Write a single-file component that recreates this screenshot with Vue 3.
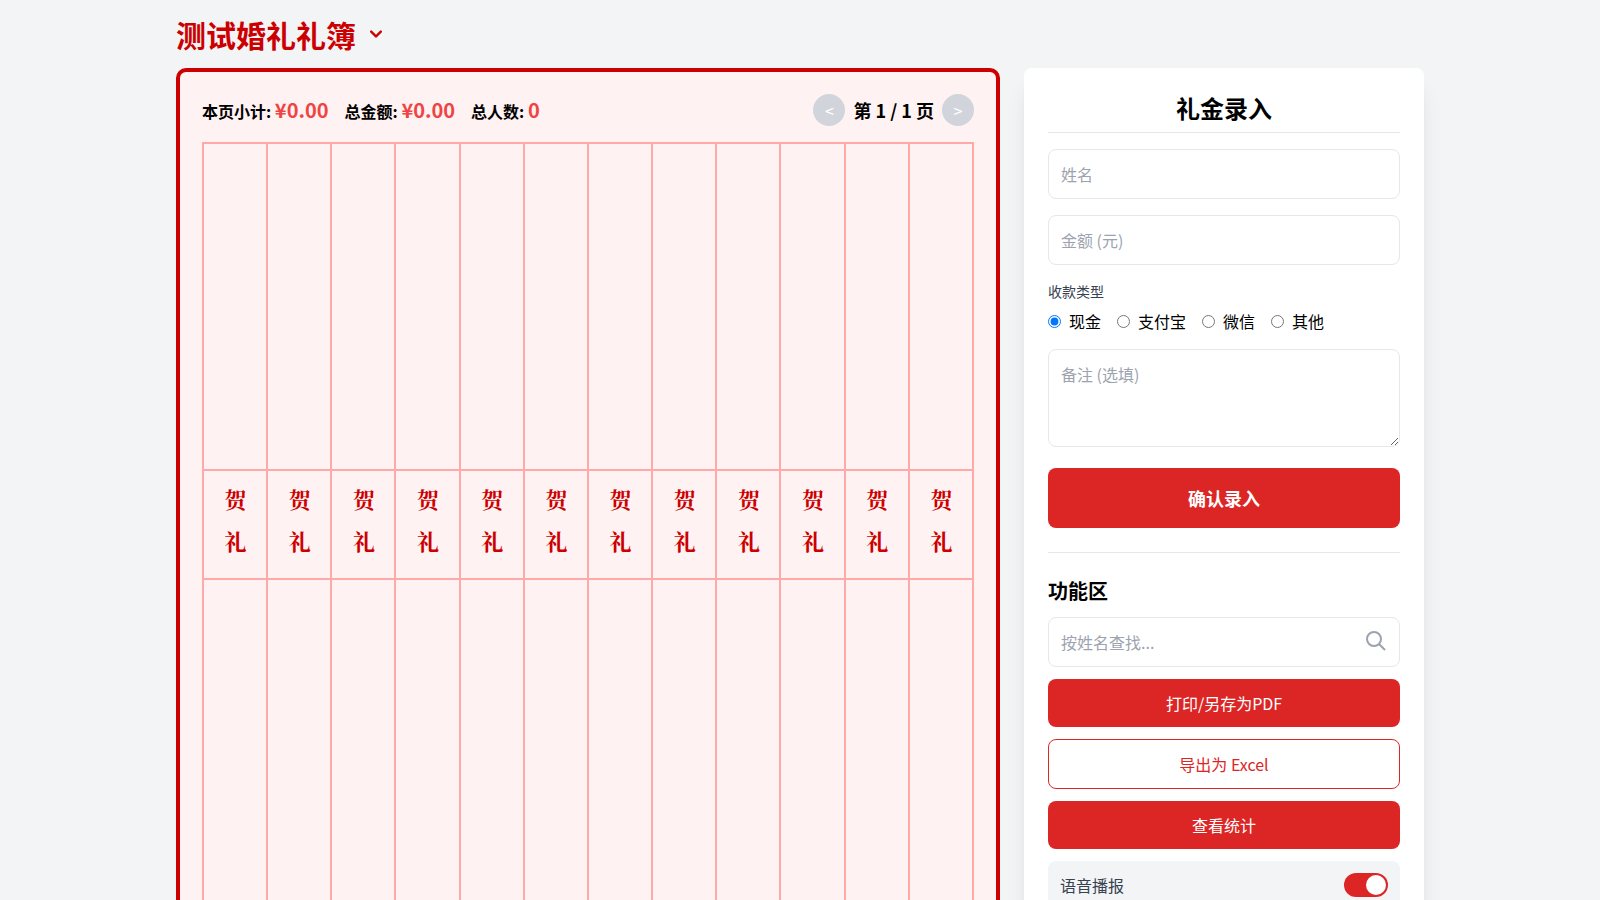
<script setup>
import { ref, computed } from 'vue'

const columns = 12
const paymentTypes = ['现金', '支付宝', '微信', '其他']

const name = ref('')
const amount = ref('')
const payment = ref('现金')
const note = ref('')
const keyword = ref('')
const voice = ref(true)
const page = ref(1)
const records = ref([])

const total = computed(() => records.value.reduce((sum, r) => sum + r.amount, 0))
const stats = computed(() => [
  { label: '本页小计:', value: '¥' + total.value.toFixed(2) },
  { label: '总金额:', value: '¥' + total.value.toFixed(2) },
  { label: '总人数:', value: String(records.value.length) },
])
</script>

<template>
  <div class="page">
    <header class="top">
      <h1>测试婚礼礼簿</h1>
      <button class="menu-toggle" type="button" aria-label="切换">
        <svg viewBox="0 0 20 20" width="24" height="24" fill="currentColor">
          <path fill-rule="evenodd" clip-rule="evenodd" d="M5.293 7.293a1 1 0 011.414 0L10 10.586l3.293-3.293a1 1 0 111.414 1.414l-4 4a1 1 0 01-1.414 0l-4-4a1 1 0 010-1.414z" />
        </svg>
      </button>
    </header>

    <main class="layout">
      <section class="book">
        <div class="book-head">
          <div class="stats">
            <div v-for="s in stats" :key="s.label">{{ s.label }} <span class="value">{{ s.value }}</span></div>
          </div>
          <nav class="pager">
            <button type="button" disabled aria-label="上一页">&lt;</button>
            <span>第 {{ page }} / 1 页</span>
            <button type="button" disabled aria-label="下一页">&gt;</button>
          </nav>
        </div>
        <div class="ledger">
          <div v-for="c in columns" :key="c" class="entry">
            <div class="cell"></div>
            <div class="cell mark"><span>贺</span><span>礼</span></div>
            <div class="cell"></div>
          </div>
        </div>
      </section>

      <aside class="panel">
        <h2>礼金录入</h2>
        <form class="form" @submit.prevent>
          <input v-model="name" class="field" type="text" placeholder="姓名" aria-label="姓名" />
          <input v-model="amount" class="field" type="text" inputmode="decimal" placeholder="金额 (元)" aria-label="金额 (元)" />
          <fieldset>
            <legend>收款类型</legend>
            <div class="radios">
              <label v-for="t in paymentTypes" :key="t">
                <input v-model="payment" type="radio" name="payment" :value="t" />
                <span>{{ t }}</span>
              </label>
            </div>
          </fieldset>
          <textarea v-model="note" class="field" rows="3" placeholder="备注 (选填)" aria-label="备注 (选填)"></textarea>
          <button class="btn submit" type="submit">确认录入</button>
        </form>

        <div class="tools">
          <h3>功能区</h3>
          <div class="search">
            <input v-model="keyword" class="field" type="text" placeholder="按姓名查找..." aria-label="按姓名查找" />
            <svg viewBox="0 0 24 24" width="24" height="24" fill="none" stroke="currentColor" stroke-width="2">
              <path d="M21 21l-6-6m2-5a7 7 0 11-14 0 7 7 0 0114 0z" />
            </svg>
          </div>
          <button class="btn" type="button">打印/另存为PDF</button>
          <button class="btn outline" type="button">导出为 Excel</button>
          <button class="btn" type="button">查看统计</button>
          <label class="voice">
            <span>语音播报</span>
            <input v-model="voice" class="switch" type="checkbox" role="switch" />
          </label>
        </div>
      </aside>
    </main>
  </div>
</template>

<style>
body {
  background: #f3f4f6;
}
</style>

<style scoped>
.page,
.page * {
  box-sizing: border-box;
}

.page {
  max-width: 1280px;
  margin: 0 auto;
  padding: 16px;
  font-family: "Noto Sans CJK SC", sans-serif;
  font-size: 16px;
  line-height: 24px;
  color: #000;
}

h1,
h2,
h3 {
  margin: 0;
  font-weight: 700;
}

button,
input,
textarea {
  margin: 0;
  font: inherit;
  color: inherit;
}

.top {
  display: flex;
  align-items: center;
  gap: 8px;
  margin-bottom: 16px;
  color: #c00;
}

h1 {
  font-size: 30px;
  line-height: 36px;
}

.menu-toggle {
  display: flex;
  padding: 0;
  border: 0;
  background: none;
}

.layout {
  display: grid;
  grid-template-columns: repeat(3, minmax(0, 1fr));
  gap: 24px;
}

.book {
  grid-column: span 2;
  padding: 22px;
  border: 4px solid #c00;
  border-radius: 10px;
  background: #fff2f2;
}

.book-head {
  display: flex;
  align-items: center;
  justify-content: space-between;
  margin-bottom: 16px;
}

.stats {
  display: flex;
  gap: 16px;
  font-weight: 700;
}

.value {
  font-size: 20px;
  line-height: 28px;
  color: #ef4444;
}

.pager {
  display: flex;
  align-items: center;
  gap: 8px;
  font-size: 18px;
  font-weight: 700;
}

.pager button {
  width: 32px;
  height: 32px;
  padding: 0;
  border: 0;
  border-radius: 50%;
  background: #d1d5db;
  color: #fff;
  font-size: 16px;
  font-weight: 400;
}

.ledger {
  display: grid;
  grid-template-columns: repeat(12, minmax(0, 1fr));
  border-top: 2px solid #ffa9a9;
  border-left: 2px solid #ffa9a9;
}

.entry {
  display: grid;
  grid-template-rows: 327px auto 327px;
  border-right: 2px solid #ffa9a9;
}

.cell {
  border-bottom: 2px solid #ffa9a9;
}

.mark {
  display: flex;
  align-items: center;
  gap: 20px;
  padding: 18px 0 25px;
  writing-mode: vertical-rl;
  font-family: "Noto Serif CJK SC", "Noto Serif SC", "Source Han Serif SC", serif;
  font-size: 22px;
  font-weight: 700;
  line-height: 32px;
  color: #c00;
}

.panel {
  padding: 24px;
  border-radius: 8px;
  background: #fff;
  box-shadow: 0 20px 25px -5px rgba(0, 0, 0, 0.1), 0 8px 10px -6px rgba(0, 0, 0, 0.1);
}

h2 {
  margin-bottom: 16px;
  padding-bottom: 8px;
  border-bottom: 1px solid #e5e7eb;
  font-size: 24px;
  line-height: 32px;
  text-align: center;
}

.form {
  display: flex;
  flex-direction: column;
  gap: 16px;
}

.field {
  display: block;
  width: 100%;
  padding: 12px;
  border: 1px solid #e5e7eb;
  border-radius: 8px;
  background: #fff;
}

input.field {
  height: 50px;
}

.field::placeholder {
  color: #9ca3af;
}

textarea.field {
  margin-bottom: 5px;
  resize: vertical;
}

fieldset {
  min-width: 0;
  margin: 0;
  padding: 0;
  border: 0;
}

legend {
  margin-bottom: 8px;
  padding: 0;
  font-size: 14px;
  line-height: 20px;
  color: #374151;
}

.radios {
  display: flex;
  flex-wrap: wrap;
  gap: 16px;
}

.radios label {
  display: flex;
  align-items: center;
  gap: 8px;
}

.radios input {
  width: 13px;
  height: 13px;
}

.btn {
  width: 100%;
  padding: 12px;
  border: 0;
  border-radius: 8px;
  background: #dc2626;
  color: #fff;
}

.submit {
  padding: 16px;
  font-size: 18px;
  font-weight: 700;
  line-height: 28px;
}

.outline {
  border: 1px solid #dc2626;
  background: #fff;
  color: #dc2626;
}

.tools {
  display: flex;
  flex-direction: column;
  gap: 12px;
  margin-top: 24px;
  padding-top: 24px;
  border-top: 1px solid #e5e7eb;
}

h3 {
  font-size: 20px;
  line-height: 28px;
}

.search {
  position: relative;
}

.search svg {
  position: absolute;
  top: 12px;
  right: 12px;
  color: #9ca3af;
}

.voice {
  display: flex;
  align-items: center;
  justify-content: space-between;
  padding: 12px;
  border-radius: 8px;
  background: #f3f4f6;
  color: #374151;
}

.switch {
  display: flex;
  width: 44px;
  height: 24px;
  padding: 2px;
  border-radius: 12px;
  background: #d1d5db;
  appearance: none;
}

.switch::before {
  content: "";
  width: 20px;
  height: 20px;
  border-radius: 50%;
  background: #fff;
}

.switch:checked {
  justify-content: flex-end;
  background: #dc2626;
}
</style>
